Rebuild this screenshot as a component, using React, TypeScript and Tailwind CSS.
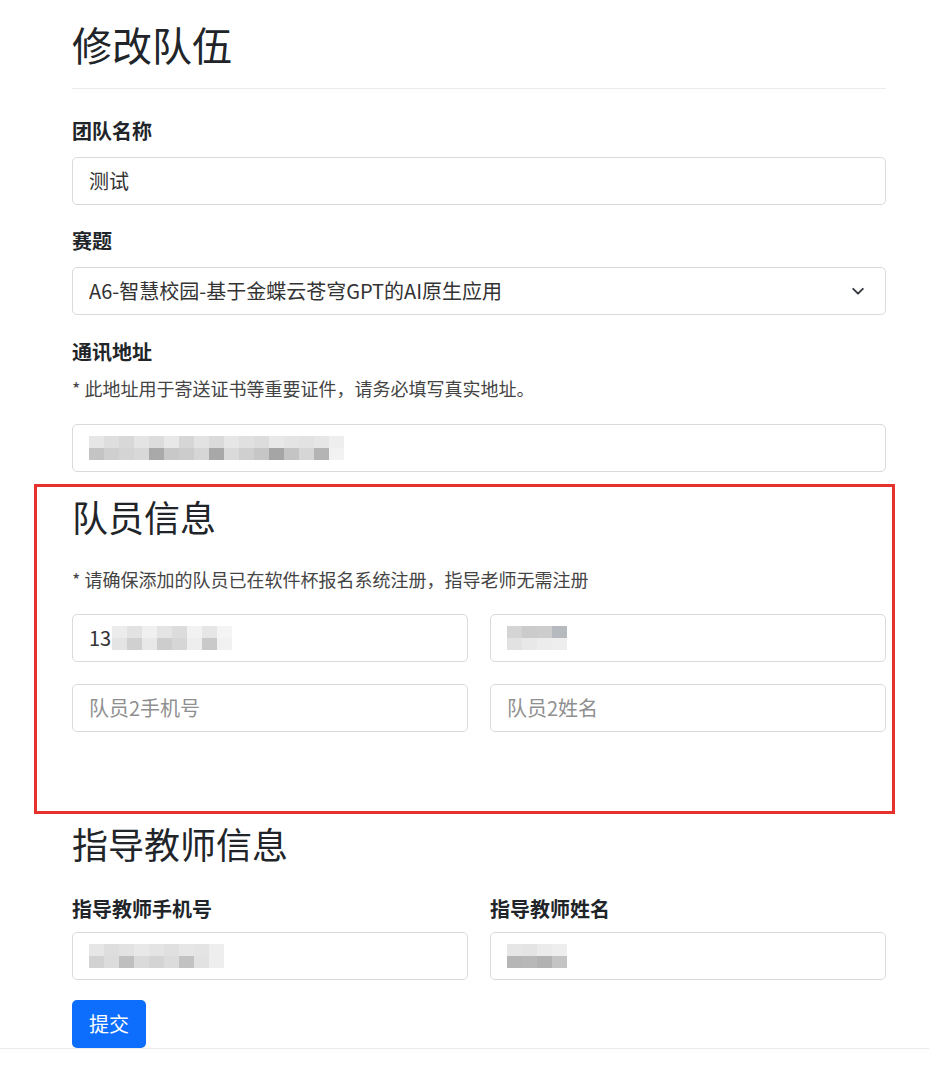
import { ReactNode } from 'react'

const font = { fontFamily: '"Noto Sans CJK SC", "Noto Sans", sans-serif' }

type MosaicProps = {
  rows: string[][]
  cell?: number
  className?: string
}

// pixelated blur used to hide personal data in the screenshot
const Mosaic = ({ rows, cell = 15, className }: MosaicProps) => (
  <div className={className}>
    {rows.map((row, i) => (
      <div key={i} className="flex">
        {row.map((c, j) => (
          <span
            key={j}
            className="block h-[12px]"
            style={{ width: cell, background: c }}
          />
        ))}
      </div>
    ))}
  </div>
)

type BoxProps = {
  children?: ReactNode
  className?: string
  placeholder?: boolean
}

const Box = ({ children, className = '', placeholder }: BoxProps) => (
  <div
    className={`flex h-[48px] items-center rounded-[5px] border border-[#d8dbde] bg-white px-[16px] text-[20px] ${
      placeholder ? 'text-[#8f8f8f]' : 'text-[#333333]'
    } ${className}`}
  >
    {children}
  </div>
)

const Label = ({ children, className = '' }: { children: ReactNode; className?: string }) => (
  <div className={`h-[24px] text-[20px] leading-[24px] font-bold text-[#212529] ${className}`}>
    {children}
  </div>
)

const Note = ({ children, className = '' }: { children: ReactNode; className?: string }) => (
  <div className={`h-[24px] text-[18px] leading-[24px] text-[#444444] ${className}`}>
    {children}
  </div>
)

export default function App() {
  return (
    <div className="min-h-[1074px] bg-white" style={font}>
      <div className="ml-[72px] w-[814px] pt-[16px] text-[#212529]">
        <h1 className="h-[56px] text-[40px] leading-[56px] font-normal">修改队伍</h1>
        <div className="mt-[16px] border-t border-[#ebebeb]" />

        <Label className="mt-[30px]">团队名称</Label>
        <Box className="mt-[14px]">测试</Box>

        <Label className="mt-[24px]">赛题</Label>
        <Box className="mt-[14px] justify-between pr-[20px]">
          <span>A6-智慧校园-基于金蝶云苍穹GPT的AI原生应用</span>
          <svg width="14" height="14" viewBox="0 0 16 16" fill="none">
            <path
              d="M2.5 5.5 8 11l5.5-5.5"
              stroke="#343a40"
              strokeWidth="2.2"
              strokeLinecap="round"
              strokeLinejoin="round"
            />
          </svg>
        </Box>

        <Label className="mt-[25px]">通讯地址</Label>
        <Note className="mt-[12px]">* 此地址用于寄送证书等重要证件，请务必填写真实地址。</Note>
        <Box className="mt-[24px]">
          <Mosaic
            rows={[
              ['#e6e6e6', '#dedede', '#d8d8d8', '#e4e4e4', '#dcdcdc', '#e8e8e8', '#d6d6d6', '#e2e2e2', '#dadada', '#e6e6e6', '#e0e0e0', '#dcdcdc', '#e8e8e8', '#e4e4e4', '#e2e2e2', '#e6e6e6', '#eeeeee'],
              ['#c4c4c4', '#cfcfcf', '#d4d4d4', '#d8d8d8', '#a9a9a9', '#c8c8c8', '#cccccc', '#d6d6d6', '#a8a8a8', '#dadada', '#cfcfcf', '#c6c6c6', '#a5a5a5', '#c4c4c4', '#d6d6d6', '#b4b4b4', '#f2f2f2'],
            ]}
          />
        </Box>

        <div className="-mr-[9px] -ml-[38px] mt-[12px] border-[3px] border-[#e5322d] pr-[6px] pb-[79px] pl-[35px]">
          <h2 className="mt-[7px] h-[44px] text-[36px] leading-[44px] font-normal">队员信息</h2>
          <Note className="mt-[29px]">* 请确保添加的队员已在软件杯报名系统注册，指导老师无需注册</Note>
          <div className="mt-[23px] grid grid-cols-2 gap-x-[22px] gap-y-[22px]">
            <Box>
              <span className="mr-[1px]">13</span>
              <Mosaic
                cell={15}
                rows={[
                  ['#ececec', '#e2e2e2', '#f0f0f0', '#e4e4e4', '#dcdcdc', '#f2f2f2', '#e6e6e6', '#f4f4f4'],
                  ['#e4e4e4', '#d0d0d0', '#e8e8e8', '#cdcdcd', '#d6d6d6', '#eeeeee', '#c9c9c9', '#f1f1f1'],
                ]}
              />
            </Box>
            <Box>
              <Mosaic
                cell={15}
                rows={[
                  ['#d4d4d4', '#cbcbcb', '#cdcdcd', '#b6b9bd'],
                  ['#e2e2e2', '#e8e8e8', '#ececec', '#eeeeee'],
                ]}
              />
            </Box>
            <Box placeholder>队员2手机号</Box>
            <Box placeholder>队员2姓名</Box>
          </div>
        </div>

        <h2 className="mt-[7px] h-[44px] text-[36px] leading-[44px] font-normal">指导教师信息</h2>
        <div className="mt-[32px] grid grid-cols-2 gap-x-[22px]">
          <div>
            <Label>指导教师手机号</Label>
            <Box className="mt-[11px]">
              <Mosaic
                cell={15}
                rows={[
                  ['#e6e6e6', '#dedede', '#e2e2e2', '#e8e8e8', '#e4e4e4', '#e0e0e0', '#e6e6e6', '#e4e4e4', '#eeeeee'],
                  ['#d2d2d2', '#dcdcdc', '#bfbfbf', '#dadada', '#d4d4d4', '#dcdcdc', '#c2c2c2', '#e2e2e2', '#eeeeee'],
                ]}
              />
            </Box>
          </div>
          <div>
            <Label>指导教师姓名</Label>
            <Box className="mt-[11px]">
              <Mosaic
                cell={15}
                rows={[
                  ['#e6e6e6', '#e4e4e4', '#ebebeb', '#eeeeee'],
                  ['#b6b6b6', '#b8b8b8', '#b2b2b2', '#c4c4c4'],
                ]}
              />
            </Box>
          </div>
        </div>

        <button className="mt-[20px] h-[48px] w-[74px] rounded-[5px] bg-[#0d6efd] text-[20px] text-white">
          提交
        </button>
      </div>
      <div className="border-t border-[#ebebeb]" />
    </div>
  )
}
